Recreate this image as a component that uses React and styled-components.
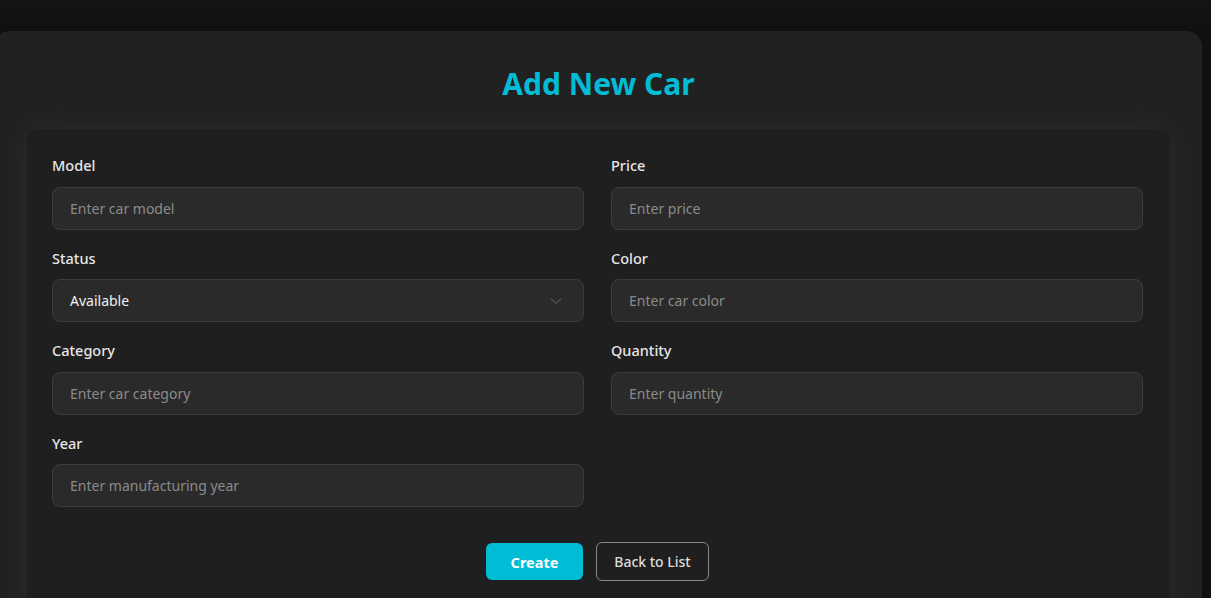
import React from 'react'
import styled, { createGlobalStyle } from 'styled-components'

const GlobalStyle = createGlobalStyle`
    html, body {
        margin: 0;
        padding: 0;
        background: #121212;
        overflow: hidden;
    }
    body {
        font-family: "Segoe UI", "Noto Sans", sans-serif;
    }
    * { box-sizing: border-box; }
`;

const fields = [
    { name: 'model', label: 'Model', placeholder: 'Enter car model' },
    { name: 'price', label: 'Price', placeholder: 'Enter price' },
    { name: 'status', label: 'Status', select: true, value: 'Available' },
    { name: 'color', label: 'Color', placeholder: 'Enter car color' },
    { name: 'category', label: 'Category', placeholder: 'Enter car category' },
    { name: 'quantity', label: 'Quantity', placeholder: 'Enter quantity' },
    { name: 'year', label: 'Year', placeholder: 'Enter manufacturing year' },
]

const Chevron = () => (
    <svg width="12" height="8" viewBox="0 0 12 8" fill="none">
        <path d="M1 1.5L6 6.5L11 1.5" stroke="#4a5058" strokeWidth="1.4" />
    </svg>
)

const App = () => {
    return (
        <Page>
            <GlobalStyle />
            <Card>
                <Title>Add New Car</Title>
                <FormCard>
                    <Grid>
                        {fields.map((f) => (
                            <Field key={f.name}>
                                <Label>{f.label}</Label>
                                {f.select ? (
                                    <SelectBox>
                                        <span>{f.value}</span>
                                        <Chevron />
                                    </SelectBox>
                                ) : (
                                    <Input placeholder={f.placeholder} />
                                )}
                            </Field>
                        ))}
                    </Grid>
                    <Actions>
                        <PrimaryButton>Create</PrimaryButton>
                        <OutlineButton>Back to List</OutlineButton>
                    </Actions>
                </FormCard>
            </Card>
        </Page>
    )
}

export default App

const Page = styled.div`
    width: 1211px;
    height: 598px;
    overflow: hidden;
    padding-top: 31px;
    background: linear-gradient(#141414, #101010 31px);
`;

const Card = styled.div`
    margin-left: -6px;
    width: 1208px;
    height: 600px;
    background: #212121;
    border-radius: 16px;
    padding: 33px 32px 0 33px;
`;

const Title = styled.h1`
    margin: 0;
    text-align: center;
    color: #00bcd4;
    font-size: 30px;
    font-weight: 700;
    line-height: 40px;
`;

const FormCard = styled.div`
    margin-top: 25px;
    background: #1f1f1f;
    border-radius: 12px;
    padding: 25px 27px 40px 25px;
    box-shadow: 0 0 30px rgba(48, 54, 60, 0.55);
`;

const Grid = styled.div`
    display: grid;
    grid-template-columns: 1fr 1fr;
    column-gap: 27px;
    row-gap: 17px;
`;

const Field = styled.div`
    display: flex;
    flex-direction: column;
`;

const Label = styled.label`
    font-size: 14.5px;
    font-weight: 500;
    line-height: 22.5px;
    color: #e6e6e6;
    margin-bottom: 10px;
`;

const Input = styled.input`
    height: 43px;
    background: #2a2a2a;
    border: 1px solid #3c3c3c;
    border-radius: 8px;
    padding: 0 17px;
    font-family: inherit;
    font-size: 14px;
    color: #e0e0e0;
    outline: none;

    &::placeholder {
        color: #8a8a8a;
    }
`;

const SelectBox = styled.div`
    height: 43px;
    background: #2a2a2a;
    border: 1px solid #3c3c3c;
    border-radius: 8px;
    padding: 0 21px 0 17px;
    display: flex;
    align-items: center;
    justify-content: space-between;
    font-size: 14px;
    color: #f0f0f0;
`;

const Actions = styled.div`
    display: flex;
    justify-content: center;
    align-items: center;
    gap: 13px;
    margin-top: 35px;
`;

const PrimaryButton = styled.button`
    width: 97px;
    height: 37px;
    background: #00bcd4;
    border: none;
    border-radius: 6px;
    color: #ffffff;
    font-family: inherit;
    font-size: 14.5px;
    font-weight: 700;
`;

const OutlineButton = styled.button`
    width: 113px;
    height: 39px;
    background: transparent;
    border: 1px solid #888888;
    border-radius: 6px;
    color: #dddddd;
    font-family: inherit;
    font-size: 14px;
    font-weight: 500;
`;
